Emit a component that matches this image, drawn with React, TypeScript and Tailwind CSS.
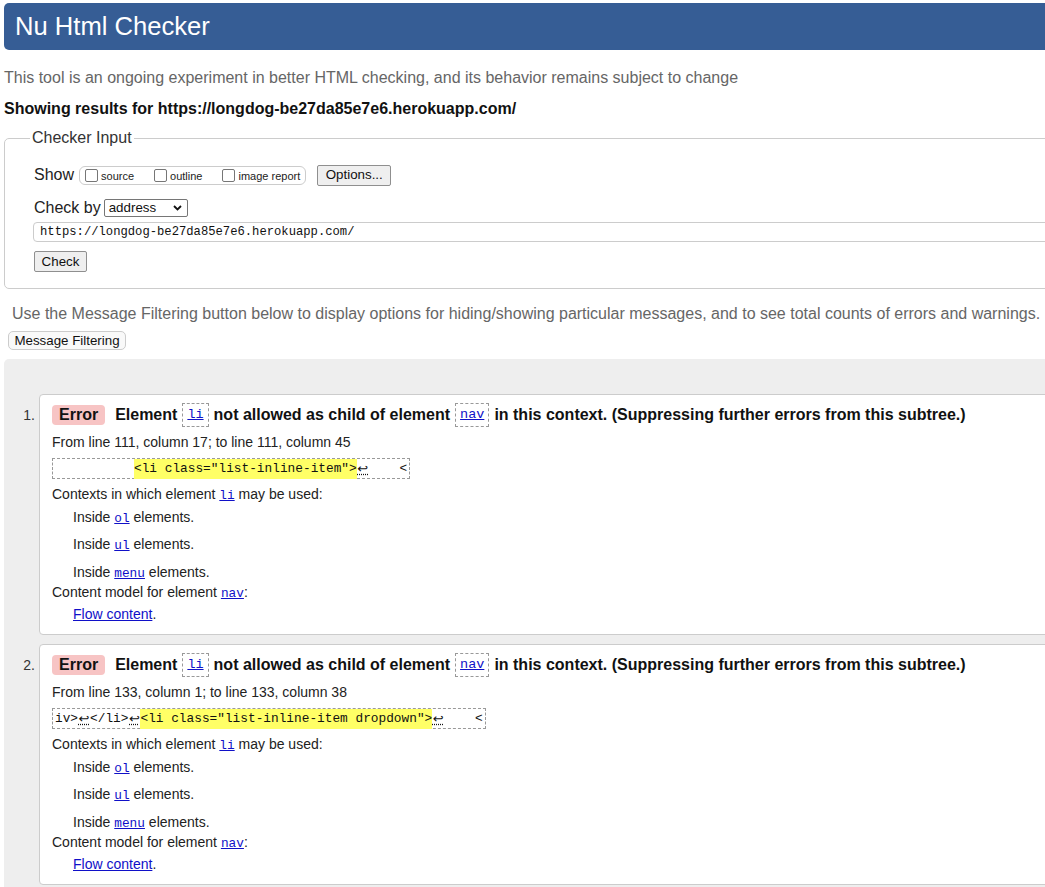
import React from "react";

const Tag = ({ children, size = "text-[12.8px]" }: { children: React.ReactNode; size?: string }) => (
  <a className={`font-['Liberation_Mono',monospace] text-[#1010c8] underline ${size}`}>{children}</a>
);

const Ret = () => (
  <span className="inline-block w-[12px] text-center font-['DejaVu_Sans',sans-serif] text-[13px] underline decoration-dotted">↩</span>
);

const Checkbox = ({ label }: { label: string }) => (
  <span className="flex items-center">
    <span className="inline-block h-[13px] w-[13px] rounded-[2px] border border-[#767676] bg-white" />
    <span className="ml-[3px] mt-[3px] text-[11px] text-[#222]">{label}</span>
  </span>
);

interface MessageProps {
  n: number;
  from: string;
  code: React.ReactNode;
}

const Message = ({ n, from, code }: MessageProps) => (
  <li className="flex">
    <div className="w-[35px] shrink-0 pt-[13px] pr-[4px] text-right text-[14px] leading-[16px] text-[#333]">{n}.</div>
    <div className="flex-1 rounded-l-[4px] border border-[#ccc] bg-white pt-[8px] pb-[10px] pl-[12px] text-[14px] leading-[20px] text-[#222]">
      <div className="flex h-[24px] items-center text-[16px] font-bold text-[#111]">
        <span className="flex h-[20px] items-center rounded-[4px] bg-[#f7c4c4] px-[7px]">Error</span>
        <span className="ml-[10px]">Element</span>
        <span className="mx-[5px] flex h-[24px] items-center border border-dashed border-[#999] px-[4px] font-normal">
          <Tag size="text-[13.5px]">li</Tag>
        </span>
        <span>not allowed as child of element</span>
        <span className="mx-[5px] flex h-[24px] items-center border border-dashed border-[#999] px-[4px] font-normal">
          <Tag size="text-[13.5px]">nav</Tag>
        </span>
        <span>in this context. (Suppressing further errors from this subtree.)</span>
      </div>
      <div className="mt-[5px] h-[20px]">{from}</div>
      <div className="mt-[6px] flex h-[21px] w-fit items-center whitespace-pre border border-dashed border-[#999] pl-[2px] pr-[2px] font-['Liberation_Mono',monospace] text-[12.8px] text-[#111]">
        {code}
      </div>
      <div className="mt-[5px] h-[20px]">
        Contexts in which element <Tag>li</Tag> may be used:
      </div>
      <div className="mt-[3px] h-[20px] pl-[21px]">
        Inside <Tag>ol</Tag> elements.
      </div>
      <div className="mt-[7px] h-[20px] pl-[21px]">
        Inside <Tag>ul</Tag> elements.
      </div>
      <div className="mt-[8px] h-[20px] pl-[21px]">
        Inside <Tag>menu</Tag> elements.
      </div>
      <div className="h-[20px]">
        Content model for element <Tag>nav</Tag>:
      </div>
      <div className="mt-[2px] h-[20px] pl-[21px]">
        <a className="text-[#1010c8] underline">Flow content</a>.
      </div>
    </div>
  </li>
);

export default function App() {
  return (
    <div className="h-[887px] w-[1045px] overflow-hidden bg-white font-['Liberation_Sans',Arial,sans-serif]">
      <div className="w-[1120px]">
        <header className="ml-[4px] mt-[3px] flex h-[47px] items-center rounded-l-[5px] bg-[#365d95] pl-[11px]">
          <h1 className="text-[25.6px] leading-none text-white">Nu Html Checker</h1>
        </header>

        <p className="ml-[4px] mt-[18px] h-[20px] text-[16px] leading-[20px] text-[#666]">
          This tool is an ongoing experiment in better HTML checking, and its behavior remains subject to change
        </p>
        <p className="ml-[4px] mt-[11px] h-[20px] text-[16px] font-bold leading-[20px] text-[#111]">
          Showing results for https://longdog-be27da85e7e6.herokuapp.com/
        </p>

        <fieldset className="ml-[4px] mt-[9px] rounded-[5px] border border-[#ccc] pb-[16px] pl-[29px]">
          <legend className="-ml-[4px] px-[2px] text-[16px] leading-[20px] text-[#333]">Checker Input</legend>

          <div className="mt-[16px] flex h-[22px] items-center text-[16px] text-[#222]">
            <span>Show</span>
            <div className="ml-[5px] flex h-[19px] items-center gap-[20px] rounded-[6px] border border-[#ccc] px-[5px]">
              <Checkbox label="source" />
              <Checkbox label="outline" />
              <Checkbox label="image report" />
            </div>
            <button className="ml-[11px] flex h-[21px] w-[74px] items-center justify-center rounded-[2px] border border-[#8f8f8f] bg-[#efefef] text-[13.33px] text-[#111]">
              Options...
            </button>
          </div>

          <div className="mt-[11px] flex h-[22px] items-center text-[16px] text-[#222]">
            <span>Check by</span>
            <div className="ml-[3px] flex h-[18px] w-[84px] items-center justify-between rounded-[2px] border border-[#767676] bg-white pl-[4px] pr-[5px] text-[13.33px] text-[#111]">
              <span>address</span>
              <svg width="9" height="6" viewBox="0 0 9 6" fill="none" stroke="#111" strokeWidth="1.8">
                <path d="M1 1l3.5 3.5L8 1" />
              </svg>
            </div>
          </div>

          <div className="mt-[3px] -ml-[1px] flex h-[20px] items-center rounded-l-[4px] border border-[#ccc] pl-[6px] font-['Liberation_Mono',monospace] text-[12.2px] text-[#111]">
            https://longdog-be27da85e7e6.herokuapp.com/
          </div>

          <button className="mt-[9px] flex h-[21px] w-[53px] items-center justify-center rounded-[2px] border border-[#8f8f8f] bg-[#efefef] text-[13.33px] text-[#111]">
            Check
          </button>
        </fieldset>

        <p className="ml-[12px] mt-[15px] h-[20px] text-[16px] leading-[20px] text-[#666]">
          Use the Message Filtering button below to display options for hiding/showing particular messages, and to see total counts of errors and warnings.
        </p>
        <button className="ml-[8px] mt-[7px] flex h-[19px] w-[118px] items-center justify-center rounded-[5px] border border-[#ccc] bg-[#f9f9f9] text-[13.33px] text-[#111]">
          Message Filtering
        </button>

        <div className="ml-[4px] mt-[9px] h-[600px] rounded-tl-[5px] bg-[#eeeeee] pt-[35px]">
          <ol className="flex flex-col gap-[9px]">
            <Message
              n={1}
              from="From line 111, column 17; to line 111, column 45"
              code={
                <>
                  <span className="inline-block w-[79px]" />
                  <span className="bg-[#ffff66]">{'<li class="list-inline-item">'}</span>
                  <Ret />
                  {"    <"}
                </>
              }
            />
            <Message
              n={2}
              from="From line 133, column 1; to line 133, column 38"
              code={
                <>
                  {"iv>"}
                  <Ret />
                  {"</li>"}
                  <Ret />
                  <span className="bg-[#ffff66]">{'<li class="list-inline-item dropdown">'}</span>
                  <Ret />
                  {"    <"}
                </>
              }
            />
          </ol>
        </div>
      </div>
    </div>
  );
}
